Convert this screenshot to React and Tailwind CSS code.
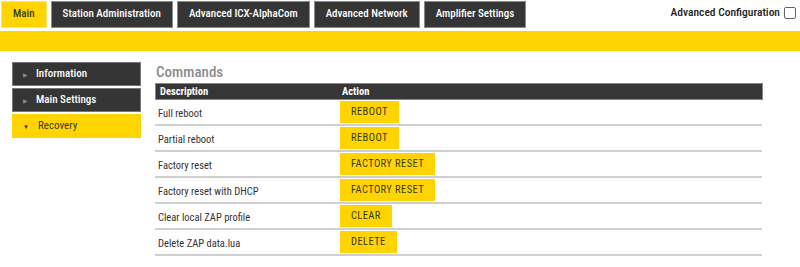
import React from "react";

const tabs = ["Station Administration", "Advanced ICX-AlphaCom", "Advanced Network", "Amplifier Settings"];
const rows = [
  ["Full reboot", "REBOOT"],
  ["Partial reboot", "REBOOT"],
  ["Factory reset", "FACTORY RESET"],
  ["Factory reset with DHCP", "FACTORY RESET"],
  ["Clear local ZAP profile", "CLEAR"],
  ["Delete ZAP data.lua", "DELETE"],
];

export default function App() {
  return (
    <div className="w-[800px] h-[267px] bg-white font-['Roboto',sans-serif] font-stretch-condensed text-[#333] overflow-hidden">
      <div className="flex items-start h-[31px] pl-[1px] pt-[1px]">
        <div className="flex gap-[4px]">
          <div className="h-[27px] px-[11px] flex items-center bg-[#ffd400] border border-[#ffe466] text-[#3a3a1a] text-[11px] font-medium">Main</div>
          {tabs.map((t) => (
            <div key={t} className="h-[27px] px-[11px] flex items-center bg-[#353535] border border-[#8a8a8a] text-white text-[11px] font-medium">{t}</div>
          ))}
        </div>
        <div className="ml-auto mr-[4px] mt-[3px] flex items-center gap-[4px] text-[11.5px] font-medium text-[#222]">
          <span>Advanced Configuration</span>
          <span className="w-[12px] h-[12px] border border-[#666] rounded-[2px] bg-white"></span>
        </div>
      </div>
      <div className="h-[20px] bg-[#ffd400]"></div>
      <div className="flex pt-[11px]">
        <div className="ml-[12px] w-[129px] flex flex-col gap-[2px]">
          {["Information", "Main Settings"].map((s) => (
            <div key={s} className="h-[24px] bg-[#353535] border border-[#777] flex items-center text-white text-[11px] font-medium">
              <span className="ml-[10px] mr-[8px] text-[#888] text-[6px]">▶</span>
              {s}
            </div>
          ))}
          <div className="h-[24px] bg-[#ffd400] flex items-center text-[#3a3a1a] text-[11px]">
            <span className="ml-[11px] mr-[9px] text-[#333] text-[6px]">▼</span>
            Recovery
          </div>
        </div>
        <div className="ml-[14px] w-[608px]">
          <div className="text-[15px] leading-[20px] font-medium text-[#8c8c8c] ml-[1px]">Commands</div>
          <div className="mt-[1px] h-[17px] bg-[#363636] border border-[#888] flex items-center text-white text-[10.5px] font-bold">
            <span className="pl-[4px] w-[186px]">Description</span>
            <span>Action</span>
          </div>
          {rows.map(([d, a], i) => (
            <div key={i} className="h-[26px] border-b-2 border-[#cfcfcf] flex items-start text-[10.5px] mr-[1px]">
              <span className="pl-[3px] w-[185px] mt-[6px]">{d}</span>
              <span className="mt-[1px] h-[22px] px-[11px] bg-[#ffd400] flex items-center tracking-[0.4px] text-[#3a3a1a]">{a}</span>
            </div>
          ))}
        </div>
      </div>
    </div>
  );
}
